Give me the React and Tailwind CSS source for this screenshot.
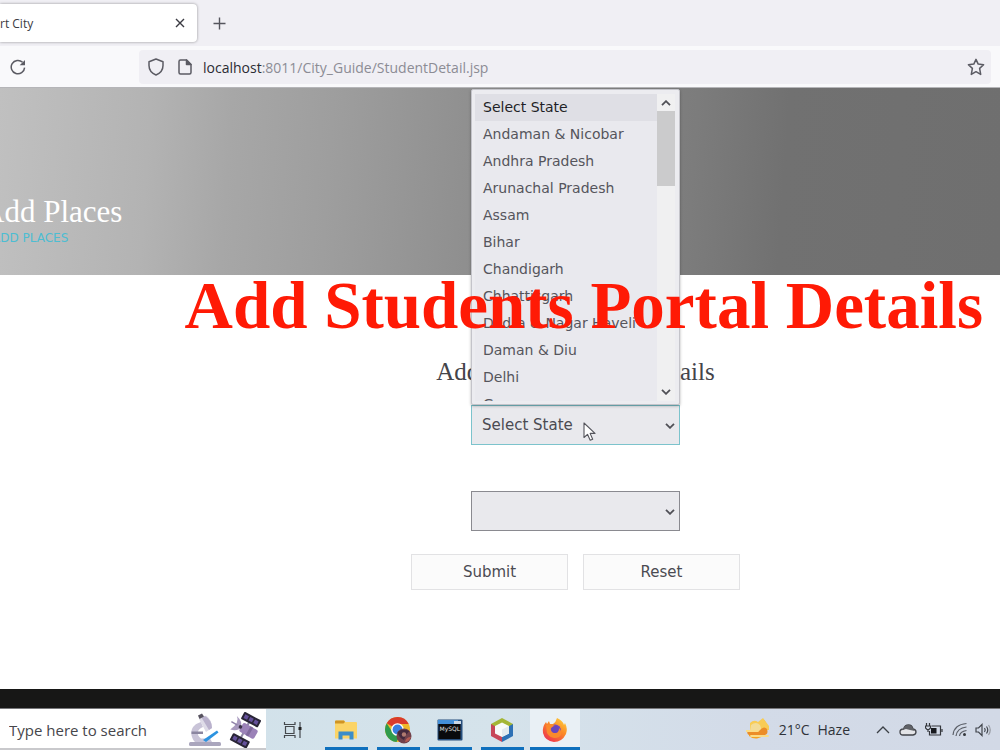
import React from "react";

const STATES = [
  "Select State",
  "Andaman & Nicobar",
  "Andhra Pradesh",
  "Arunachal Pradesh",
  "Assam",
  "Bihar",
  "Chandigarh",
  "Chhattisgarh",
  "Dadra & Nagar Haveli",
  "Daman & Diu",
  "Delhi",
  "Goa",
];

function Chevron({ up = false, className = "" }) {
  return (
    <svg viewBox="0 0 10 6" className={`h-[6px] w-[10px] ${className}`} fill="none" stroke="#505056" strokeWidth="1.8" aria-hidden="true">
      <path d={up ? "M1 5.2 5 1.2 9 5.2" : "M1 .8 5 4.8 9 .8"} />
    </svg>
  );
}

function TabStrip() {
  return (
    <div className="flex h-[46px] items-center bg-[#f0eff4]">
      <div className="flex h-[38px] w-[197px] items-center justify-between rounded-r-[4px] bg-white pr-[11px] shadow-[0_0_3px_rgba(0,0,0,0.4)]">
        <span className="pt-px text-[12px] text-[#3a3a42]">rt City</span>
        <button type="button" aria-label="Close tab" className="flex size-3 items-center justify-center">
          <svg viewBox="0 0 10 10" className="size-[10px]" stroke="#3a3a42" strokeWidth="1.4" aria-hidden="true">
            <path d="M1 1 9 9M9 1 1 9" />
          </svg>
        </button>
      </div>
      <button type="button" aria-label="New tab" className="ml-4">
        <svg viewBox="0 0 13 13" className="size-[13px]" stroke="#55555d" strokeWidth="1.4" aria-hidden="true">
          <path d="M6.5 .5v12M.5 6.5h12" />
        </svg>
      </button>
    </div>
  );
}

function Toolbar() {
  return (
    <div className="flex h-[42px] items-center border-b border-[#b5b5b8] bg-[#f9f9fb] pt-px pr-[9px] pl-[10px]">
      <button type="button" aria-label="Reload">
        <svg viewBox="0 0 16 16" className="size-4" fill="none" stroke="#5b5b63" strokeWidth="1.5" aria-hidden="true">
          <path d="M14.6 8.6A6.7 6.7 0 1 1 12.6 3.3" />
          <path d="M15 1v5.3H9.7z" fill="#5b5b63" stroke="none" />
        </svg>
      </button>
      <div className="ml-[113px] flex h-[34px] flex-1 items-center rounded-[4px] bg-[#f0eff4] pr-[6px] pl-[9px]">
        <svg viewBox="0 0 16 18" className="h-[18px] w-4 shrink-0" fill="none" stroke="#5b5b63" strokeWidth="1.5" strokeLinejoin="round" aria-hidden="true">
          <path d="M8 1 15 3.7V7.5C15 12 12.300 15.200 8 17 3.700 15.200 1 12 1 7.500V3.700z" />
        </svg>
        <svg viewBox="0 0 14 16" className="ml-[14px] h-4 w-[14px] shrink-0" fill="none" stroke="#5b5b63" strokeWidth="1.5" strokeLinejoin="round" aria-hidden="true">
          <path d="M2.500 1H8.500L13 5.500V13.500Q13 15 11.500 15H2.500Q1 15 1 13.500V2.500Q1 1 2.500 1z" />
          <path d="M8.500 1V5.500H13z" fill="#5b5b63" />
        </svg>
        <p className="ml-[11px] flex-1 truncate text-[14px] text-[#8c8c94]">
          <span className="text-[#2b2b33]">localhost</span>:8011/City_Guide/StudentDetail.jsp
        </p>
        <button type="button" aria-label="Bookmark this page">
          <svg viewBox="0 0 18 18" className="size-[18px]" fill="none" stroke="#5b5b63" strokeWidth="1.5" strokeLinejoin="round" aria-hidden="true">
            <path d="M9 1.400 11.200 6.100 16.600 6.700 12.600 10.400 13.700 16.400 9 13.700 4.300 16.400 5.400 10.400 1.400 6.700 6.800 6.100z" />
          </svg>
        </button>
      </div>
    </div>
  );
}

function Banner() {
  return (
    <header className="h-[187px] overflow-hidden bg-[linear-gradient(94deg,#c0c0c0_0%,#b3b3b3_15%,#a7a7a7_23%,#9e9e9e_33%,#8f8f8f_47%,#7c7c7c_69%,#717171_78%,#6f6f6f_100%)] pt-[106px]">
      <h1 className="-ml-[18px] font-['Liberation_Serif',serif] text-[31px] leading-9 whitespace-nowrap text-white">Add Places</h1>
      <p className="-ml-[8px] font-['DejaVu_Sans',sans-serif] text-[12px] leading-4 whitespace-nowrap text-[#4cbdd2]">ADD PLACES</p>
    </header>
  );
}

function StateList() {
  return (
    <div className="absolute bottom-full left-0 flex h-[316px] w-full rounded-[2px] border border-[#c4c4ca] bg-[#ececf0] pt-[4px] pr-[4px] pb-[3px] pl-[3px] shadow-[0_1px_3px_rgba(0,0,0,0.3)]">
      <ul role="listbox" aria-label="States" className="flex-1 overflow-hidden bg-[#e9e9ee]">
        {STATES.map((name, i) => (
          <li
            key={name}
            role="option"
            aria-selected={i === 0}
            className={`h-[27px] pl-[8px] text-[14px] leading-[27px] whitespace-nowrap ${i === 0 ? "bg-[#dfdfe5] text-[#1f1f27]" : "text-[#55555c]"}`}
          >
            {name}
          </li>
        ))}
      </ul>
      <div className="flex w-[18px] flex-col items-center justify-between bg-[#f0f0f1] pb-[6px]">
        <div className="flex w-full flex-col items-center">
          <span className="flex h-[17px] items-center">
            <Chevron up />
          </span>
          <span className="h-[75px] w-full bg-[#cbcbcc]" />
        </div>
        <Chevron />
      </div>
    </div>
  );
}

function StudentForm() {
  return (
    <form className="flex flex-col items-center font-['DejaVu_Sans',sans-serif] text-[15px] text-[#4b4b52]" onSubmit={(e) => e.preventDefault()}>
      <h2 className="font-['Liberation_Serif',serif] text-[25px] leading-8 text-[#44444a]">Add Students Portal Details</h2>
      <div className="relative mt-[17px] w-[209px]">
        <select aria-label="State" defaultValue="Select State" className="h-10 w-full appearance-none border border-[#7cc3cc] bg-[#e9e9ed] pt-px pl-[10px] outline-none">
          {STATES.map((name) => (
            <option key={name}>{name}</option>
          ))}
        </select>
        <Chevron className="pointer-events-none absolute top-[18px] right-[5px]" />
        <StateList />
        <svg viewBox="0 0 14 20" className="pointer-events-none absolute top-[17px] left-[112px] h-5 w-[14px]" fill="#fff" stroke="#55555c" strokeWidth="1.100" strokeLinejoin="round" aria-hidden="true">
          <path d="M1 1V15.500L4.500 12.300 7.200 18.300 9.700 17.200 7.100 11.400H12z" />
        </svg>
      </div>
      <div className="relative mt-[46px] w-[209px]">
        <select aria-label="City" className="h-10 w-full appearance-none border border-[#8a8a90] bg-[#e9e9ed] pt-px pl-[10px] outline-none" />
        <Chevron className="pointer-events-none absolute top-[18px] right-[5px]" />
      </div>
      <div className="mt-[23px] flex gap-[15px]">
        <button type="submit" className="h-9 w-[157px] border border-[#e2e2e4] bg-[#fbfbfb] pt-px">Submit</button>
        <button type="reset" className="h-9 w-[157px] border border-[#e2e2e4] bg-[#fbfbfb] pt-px">Reset</button>
      </div>
    </form>
  );
}

function Microscope() {
  return (
    <svg viewBox="0 0 32 34" className="h-[34px] w-8" aria-hidden="true">
      <rect x="0" y="29" width="32" height="4" rx="1.500" fill="#aaa6bd" />
      <path d="M12 9C1 12 0 22 6 29H23L21 25.500H12C7 22 8 16 14 14z" fill="#c9c4d8" />
      <path d="M2.500 18.500H14V21H2.500z" fill="#8b86a0" />
      <path d="M10 6 17 2.500Q23 7 23 15L17 19z" fill="#dedbe8" />
      <path d="M16 3Q23 7 23 15L20 17 12.500 4.500z" fill="#b9b1cc" />
      <path d="M9 2.500 13 .5 15 3.500 10.500 6z" fill="#57535f" />
      <path d="M14 27 28 17.500 29.500 19.500 17 29z" fill="#2c93e0" />
    </svg>
  );
}

function Satellite() {
  return (
    <svg viewBox="0 0 34 36" className="h-9 w-[34px]" aria-hidden="true">
      <g transform="rotate(28 17 18)">
        <rect x="16" y="3" width="2" height="30" fill="#8d86a3" />
        <rect x="8" y="2" width="19" height="8" rx="1" fill="#292536" />
        <rect x="8" y="26" width="19" height="8" rx="1" fill="#292536" />
        <g fill="#65519b">
          <rect x="10" y="4" width="4" height="4" />
          <rect x="15.500" y="4" width="4" height="4" />
          <rect x="21" y="4" width="4" height="4" />
          <rect x="10" y="28" width="4" height="4" />
          <rect x="15.500" y="28" width="4" height="4" />
          <rect x="21" y="28" width="4" height="4" />
        </g>
      </g>
      <g transform="rotate(30 17 18)">
        <rect x="12" y="12" width="17" height="10" rx="2" fill="#9b82b8" />
        <rect x="20" y="12" width="3" height="10" fill="#806a9c" />
        <path d="M3 10Q9 14 4 25 12 23 12 17.500 11 12 3 10z" fill="#a99abf" />
        <path d="M1 17.500H8" stroke="#8f82a8" strokeWidth="1.500" />
        <circle cx="11.500" cy="17.500" r="1.800" fill="#3b3348" />
      </g>
    </svg>
  );
}

function TaskView() {
  return (
    <svg viewBox="0 0 20 18" className="h-[18px] w-5" fill="none" stroke="#45494d" strokeWidth="1.200" aria-hidden="true">
      <path d="M1.500 1V3.500H12V1M1.500 17V14.500H12V17M2.500 5.500H11V12.500H2.500zM17 1V17" />
      <path d="M15.500 6H18.500V9H15.500z" fill="#222" stroke="none" />
    </svg>
  );
}

function FolderIcon() {
  return (
    <svg viewBox="0 0 24 20" className="h-5 w-6" aria-hidden="true">
      <path d="M1 1.500Q1 .5 2 .5H10L11.500 2H22Q23 2 23 3V18.500H1z" fill="#fbd467" />
      <path d="M1 1.500Q1 .5 2 .5H10L11 2 9.500 3.500H1z" fill="#cf9424" />
      <path d="M4.500 11.500H19.500V19.500H15.500V15.500H8.500V19.500H4.500z" fill="#3b8dc9" />
    </svg>
  );
}

function ChromeIcon() {
  return (
    <svg viewBox="0 0 28 28" className="size-7" aria-hidden="true">
      <circle cx="13.500" cy="13.500" r="12.500" fill="#efb92a" />
      <path d="M13.500 13.500 2.700 7.250A12.500 12.500 0 0 1 24.700 8H13.500z" fill="#d93c2c" />
      <path d="M2.700 7.250A12.500 12.500 0 0 0 12.500 26L18 16 9 17z" fill="#2f9b4d" />
      <circle cx="13.500" cy="13.500" r="6.300" fill="#fff" />
      <circle cx="13.500" cy="13.500" r="4.900" fill="#397fe0" />
      <circle cx="20" cy="20" r="7.500" fill="#71424c" />
      <path d="M13.500 16Q18 12 25.500 15 22 18 20 24 15 22 13.500 16z" fill="#43293d" />
      <circle cx="20" cy="18.500" r="2.200" fill="#b07a70" />
      <path d="M21 26Q22 21 27 21 25 26 21 26z" fill="#b45b52" />
    </svg>
  );
}

function MySqlIcon() {
  return (
    <svg viewBox="0 0 26 22" className="h-[22px] w-[26px]" aria-hidden="true">
      <rect x=".5" y=".5" width="25" height="21" rx="1" fill="#274f7d" />
      <rect x="1" y="1" width="20" height="4" fill="#438fd8" />
      <path d="M17 2H24V5H17z" fill="#cbd8e5" />
      <rect x="1.500" y="5" width="22" height="15" fill="#090a0c" />
      <text x="2.500" y="12" fill="#e2e2e2" fontSize="6" fontFamily="DejaVu Sans, sans-serif">MySQL</text>
    </svg>
  );
}

function NetBeansIcon() {
  return (
    <svg viewBox="0 0 24 26" className="h-[26px] w-6" aria-hidden="true">
      <path d="M12 1 23 7V10L12 13 1 10V7z" fill="#a4b636" />
      <path d="M1 7 12 13V25L1 19z" fill="#c74658" />
      <path d="M23 7 12 13V25L23 19z" fill="#2e71b5" />
      <path d="M12 5.500 19 9V16.500L12 20 5 16.500V9z" fill="#f8faf9" />
      <path d="M12 12.500 19 9V16.500L12 20z" fill="#e3eaee" />
    </svg>
  );
}

function FirefoxIcon() {
  return (
    <svg viewBox="0 0 26 26" className="size-[26px]" aria-hidden="true">
      <defs>
        <linearGradient id="fox" x1=".9" y1="0" x2=".2" y2="1">
          <stop offset="0" stopColor="#ffd43d" />
          <stop offset=".45" stopColor="#fb8826" />
          <stop offset="1" stopColor="#ed2f51" />
        </linearGradient>
      </defs>
      <path d="M15 1Q21 4 22 8L23 6Q26 12 24 17 20 25 12 25 3 24 1 16 0 10 4 5L5 7 7 4 8 7H11Q14 5 15 1z" fill="url(#fox)" />
      <circle cx="13" cy="13.500" r="6" fill="#7047c2" />
      <path d="M4 8Q9 6 13 9L9 11Q8 15 13 16 17 15 17 11 22 16 17 20 9 23 5 16z" fill="#fa8a2c" />
      <circle cx="13" cy="12.500" r="3.600" fill="#6846bd" />
    </svg>
  );
}

function WeatherIcon() {
  return (
    <svg viewBox="0 0 25 26" className="h-[26px] w-[25px]" aria-hidden="true">
      <path d="M17 2A11 11 0 1 1 3 19L3 16H14L20 9z" fill="#f5a21d" />
      <path d="M4 6Q8 2 12 5L17 1 20 5 23 9V13H4z" fill="#f8cc55" />
      <path d="M5 8Q10 4 14 8L16 14H4z" fill="#f3dc98" />
      <path d="M1 14H13Q18 8 21 12 23 18 17 18H3Q1 17 1 14z" fill="#ec8d27" />
      <path d="M0 14H12M5 19H22" stroke="#fbdc86" strokeWidth="1.800" strokeLinecap="round" />
    </svg>
  );
}

const TASKS = [
  { label: "File Explorer", Icon: FolderIcon },
  { label: "Chrome", Icon: ChromeIcon },
  { label: "MySQL", Icon: MySqlIcon },
  { label: "NetBeans", Icon: NetBeansIcon },
];

function Tray() {
  return (
    <div className="flex items-center pr-[9px] text-[14px] text-[#2f3238]">
      <WeatherIcon />
      <span className="ml-2">21°C</span>
      <span className="ml-2">Haze</span>
      <button type="button" aria-label="Show hidden icons" className="ml-[26px]">
        <svg viewBox="0 0 14 8" className="h-2 w-[14px]" fill="none" stroke="#3c4046" strokeWidth="1.300" aria-hidden="true">
          <path d="M1 7 7 1 13 7" />
        </svg>
      </button>
      <svg viewBox="0 0 18 12" className="ml-[9px] h-3 w-[18px]" fill="#e4e5e8" stroke="#424449" strokeWidth="1.300" aria-hidden="true">
        <path d="M4 11Q1 11 1 8T4.500 5Q6 1 9.500 1T14 5Q17 5.500 17 8T14 11z" />
        <path d="M2 6.500 4.500 4.500Q6 1 9.500 1T14 5L16 7 11 6 7 5z" fill="#606267" stroke="none" />
      </svg>
      <svg viewBox="0 0 18 14" className="ml-2 h-[14px] w-[18px]" fill="none" stroke="#34373c" strokeWidth="1.200" aria-hidden="true">
        <path d="M6.500 3H15.500V12H4.500V8M17 6V9" />
        <path d="M6 5H11.500V10.500H6z" fill="#17191d" stroke="none" />
        <path d="M1.500 0V3M4.500 0V3M.5 3H5.500V5L4 6.500H2L.5 5zM3 6.500V9" />
      </svg>
      <svg viewBox="0 0 16 15" className="ml-[9px] h-[15px] w-4" fill="none" stroke="#5a5e66" strokeWidth="1.200" aria-hidden="true">
        <path d="M1 13Q2 2.500 14.500 1.500M4 14Q5 6 14.500 5M7.500 14Q8 9.500 14.500 8.500" />
        <circle cx="12.500" cy="12.500" r="1.500" fill="#34373c" stroke="none" />
      </svg>
      <svg viewBox="0 0 16 14" className="ml-[7px] h-[14px] w-4" fill="none" stroke="#41454c" strokeWidth="1.200" aria-hidden="true">
        <path d="M1 5H3.500L7 1.500V12.500L3.500 9H1zM9.500 5Q11 7 9.500 9M11.500 3.500Q14 7 11.500 10.500" />
        <path d="M13.500 2Q17 7 13.500 12" stroke="#989ca4" />
      </svg>
    </div>
  );
}

function Taskbar() {
  return (
    <footer className="flex h-[41px] justify-between bg-[linear-gradient(90deg,#cfe0e9_0%,#d5e3eb_50%,#d3dbe8_75%,#d2d9e6_100%)]">
      <div className="flex">
        <div className="flex w-[266px] items-center border-b-2 border-[#c9c9cc] bg-white pt-[3px] pr-[4px] pl-[9px]">
          <input
            type="text"
            aria-label="Type here to search"
            placeholder="Type here to search"
            className="min-w-0 flex-1 text-[15px] outline-none placeholder:text-[#46464b]"
          />
          <Microscope />
          <span className="ml-[7px]">
            <Satellite />
          </span>
        </div>
        <button type="button" aria-label="Task view" className="flex w-[54px] items-center justify-center">
          <TaskView />
        </button>
        {TASKS.map(({ label, Icon }) => (
          <button key={label} type="button" aria-label={label} className="flex w-[52px] flex-col items-center pt-[3px]">
            <span className="flex flex-1 items-center">
              <Icon />
            </span>
            <span className="h-[3px] w-[43px] bg-[#0f70bd]" />
          </button>
        ))}
        <button type="button" aria-label="Firefox" className="ml-[2px] flex w-[50px] flex-col items-center bg-[#e9f0f5] pt-[3px]">
          <span className="flex flex-1 items-center">
            <FirefoxIcon />
          </span>
          <span className="h-[3px] w-full bg-[#0f70bd]" />
        </button>
      </div>
      <Tray />
    </footer>
  );
}

export default function App() {
  return (
    <div className="flex min-h-screen flex-col overflow-hidden bg-white font-['Open_Sans',sans-serif]">
      <TabStrip />
      <Toolbar />
      <Banner />
      <main className="relative flex-1 pt-[81px] pb-8 pl-[151px]">
        <StudentForm />
        <p className="pointer-events-none absolute -top-[3px] right-[17px] font-['Liberation_Serif',serif] text-[67px] leading-none font-bold whitespace-nowrap text-[#ff1a05]">
          Add Students Portal Details
        </p>
      </main>
      <div className="h-5 border-b border-[#77777a] bg-[#171716]" />
      <Taskbar />
    </div>
  );
}
